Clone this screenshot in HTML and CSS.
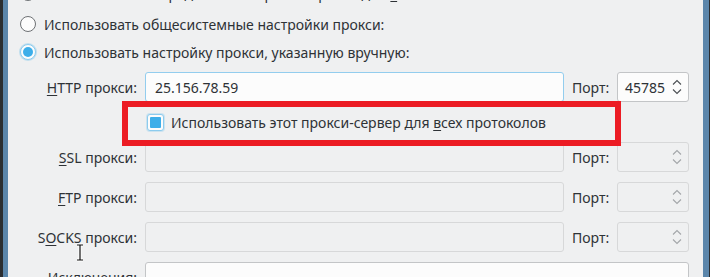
FILE: index.html
```html
<!DOCTYPE html>
<html lang="ru">
<head>
<meta charset="utf-8">
<title>Прокси</title>
<link rel="stylesheet" href="styles.css">
</head>
<body>
<div class="frame">
  <div class="window">
    <div class="radio-row ghost"><span class="radio"></span><span>Автоматически определять настройки прокси для <u>э</u>той сети</span></div>
    <div class="radio-row"><span class="radio"></span><span>Использовать общесистемные настройки прокси:</span></div>
    <div class="radio-row"><span class="radio checked"></span><span>Использовать настройку прокси, указанную вручную:</span></div>

    <div class="form">
      <span class="lbl"><u>H</u>TTP прокси:</span>
      <div class="field focus">25.156.78.59</div>
      <span class="port">Порт:</span>
      <div class="field spin"><span>45785</span>
        <svg class="arrows" width="10" height="16" viewBox="0 0 10 16"><path d="M1 5.5 L5 1.5 L9 5.5 M1 10.5 L5 14.5 L9 10.5" fill="none" stroke="#4a4e52" stroke-width="1.1"/></svg>
      </div>

      <div class="check-row"><span class="checkbox"></span><span>Использовать этот прокси-сервер для <u>в</u>сех протоколов</span></div>

      <span class="lbl"><u>S</u>SL прокси:</span>
      <div class="field disabled"></div>
      <span class="port">Порт:</span>
      <div class="field spin disabled">
        <svg class="arrows" width="10" height="16" viewBox="0 0 10 16"><path d="M1 5.5 L5 1.5 L9 5.5 M1 10.5 L5 14.5 L9 10.5" fill="none" stroke="#a3a6a9" stroke-width="1.1"/></svg>
      </div>

      <span class="lbl"><u>F</u>TP прокси:</span>
      <div class="field disabled"></div>
      <span class="port">Порт:</span>
      <div class="field spin disabled">
        <svg class="arrows" width="10" height="16" viewBox="0 0 10 16"><path d="M1 5.5 L5 1.5 L9 5.5 M1 10.5 L5 14.5 L9 10.5" fill="none" stroke="#a3a6a9" stroke-width="1.1"/></svg>
      </div>

      <span class="lbl">S<u>O</u>CKS прокси:</span>
      <div class="field disabled"></div>
      <span class="port">Порт:</span>
      <div class="field spin disabled">
        <svg class="arrows" width="10" height="16" viewBox="0 0 10 16"><path d="M1 5.5 L5 1.5 L9 5.5 M1 10.5 L5 14.5 L9 10.5" fill="none" stroke="#a3a6a9" stroke-width="1.1"/></svg>
      </div>

      <span class="lbl">Исключения:</span>
      <div class="field wide"></div>
    </div>
  </div>

  <div class="annotation"></div>
  <svg class="ibeam" width="10" height="20" viewBox="0 0 10 20">
    <path d="M2 2 H8 M5 2 V17 M2 17 H8" fill="none" stroke="#ffffff" stroke-width="3"/>
    <path d="M2 2 H8 M5 2 V17 M2 17 H8" fill="none" stroke="#111111" stroke-width="1.2"/>
  </svg>
</div>
</body>
</html>
```

FILE: styles.css
```css
html, body {
  margin: 0;
  padding: 0;
}

body {
  background: #2b2e31;
  font-family: "Noto Sans", "Open Sans", sans-serif;
  font-size: 14px;
  color: #2e3236;
  height: 277px;
  overflow: hidden;
}

u {
  text-decoration-thickness: 1px;
  text-underline-offset: 2px;
}

.frame {
  position: relative;
  height: 277px;
  padding-left: 3px;
  padding-right: 1px;
  box-sizing: border-box;
}

.window {
  height: 100%;
  box-sizing: border-box;
  background: #eff0f1;
  border-left: 5px solid #5b86ab;
  border-right: 6px solid #5b86ab;
  padding-left: 12px;
  overflow: hidden;
}

.radio-row {
  display: flex;
  align-items: center;
  gap: 8px;
  height: 28px;
}

.ghost {
  margin-top: -21px;
  margin-bottom: 3px;
}

.radio {
  width: 16px;
  height: 16px;
  box-sizing: border-box;
  border: 1px solid #6e7174;
  border-radius: 50%;
  background: #fcfcfc;
  position: relative;
  flex: none;
}

.radio.checked {
  border-color: #8ccbee;
  box-shadow: 0 0 0 1px rgba(61, 174, 233, 0.25);
}

.radio.checked::after {
  content: "";
  position: absolute;
  left: 2px;
  top: 2px;
  width: 10px;
  height: 10px;
  border-radius: 50%;
  background: #3daee9;
}

.form {
  margin-top: 6px;
  display: grid;
  grid-template-columns: 117px 419px 37px 72px;
  grid-template-rows: 30px 20px 30px 30px 30px 30px;
  column-gap: 8px;
  row-gap: 10px;
  align-items: center;
}

.lbl {
  text-align: right;
  white-space: nowrap;
}

.port {
  white-space: nowrap;
}

.field {
  height: 30px;
  box-sizing: border-box;
  border: 1px solid #c3c5c7;
  border-radius: 3px;
  background: #fcfcfc;
  padding-left: 9px;
  display: flex;
  align-items: center;
}

.field.focus {
  border-color: #93cdee;
}

.field.disabled {
  background: #eff0f1;
  border-color: #d7d8d9;
}

.field.wide {
  grid-column: 2 / 5;
}

.spin {
  padding-left: 7px;
  padding-right: 6px;
}

.arrows {
  margin-left: auto;
  flex: none;
}

.check-row {
  grid-column: 2 / 5;
  display: flex;
  align-items: center;
  gap: 7px;
  padding-left: 2px;
}

.checkbox {
  width: 17px;
  height: 17px;
  box-sizing: border-box;
  border: 1px solid #8ccbee;
  border-radius: 3px;
  background: #fcfcfc;
  box-shadow: 0 0 0 1px rgba(61, 174, 233, 0.2);
  position: relative;
  flex: none;
}

.checkbox::after {
  content: "";
  position: absolute;
  left: 2px;
  top: 2px;
  width: 11px;
  height: 11px;
  border-radius: 1px;
  background: #3daee9;
}

.annotation {
  position: absolute;
  left: 122px;
  top: 101px;
  width: 499px;
  height: 45px;
  box-sizing: border-box;
  border: 6px solid #ec1c24;
}

.ibeam {
  position: absolute;
  left: 75px;
  top: 243px;
}
```
